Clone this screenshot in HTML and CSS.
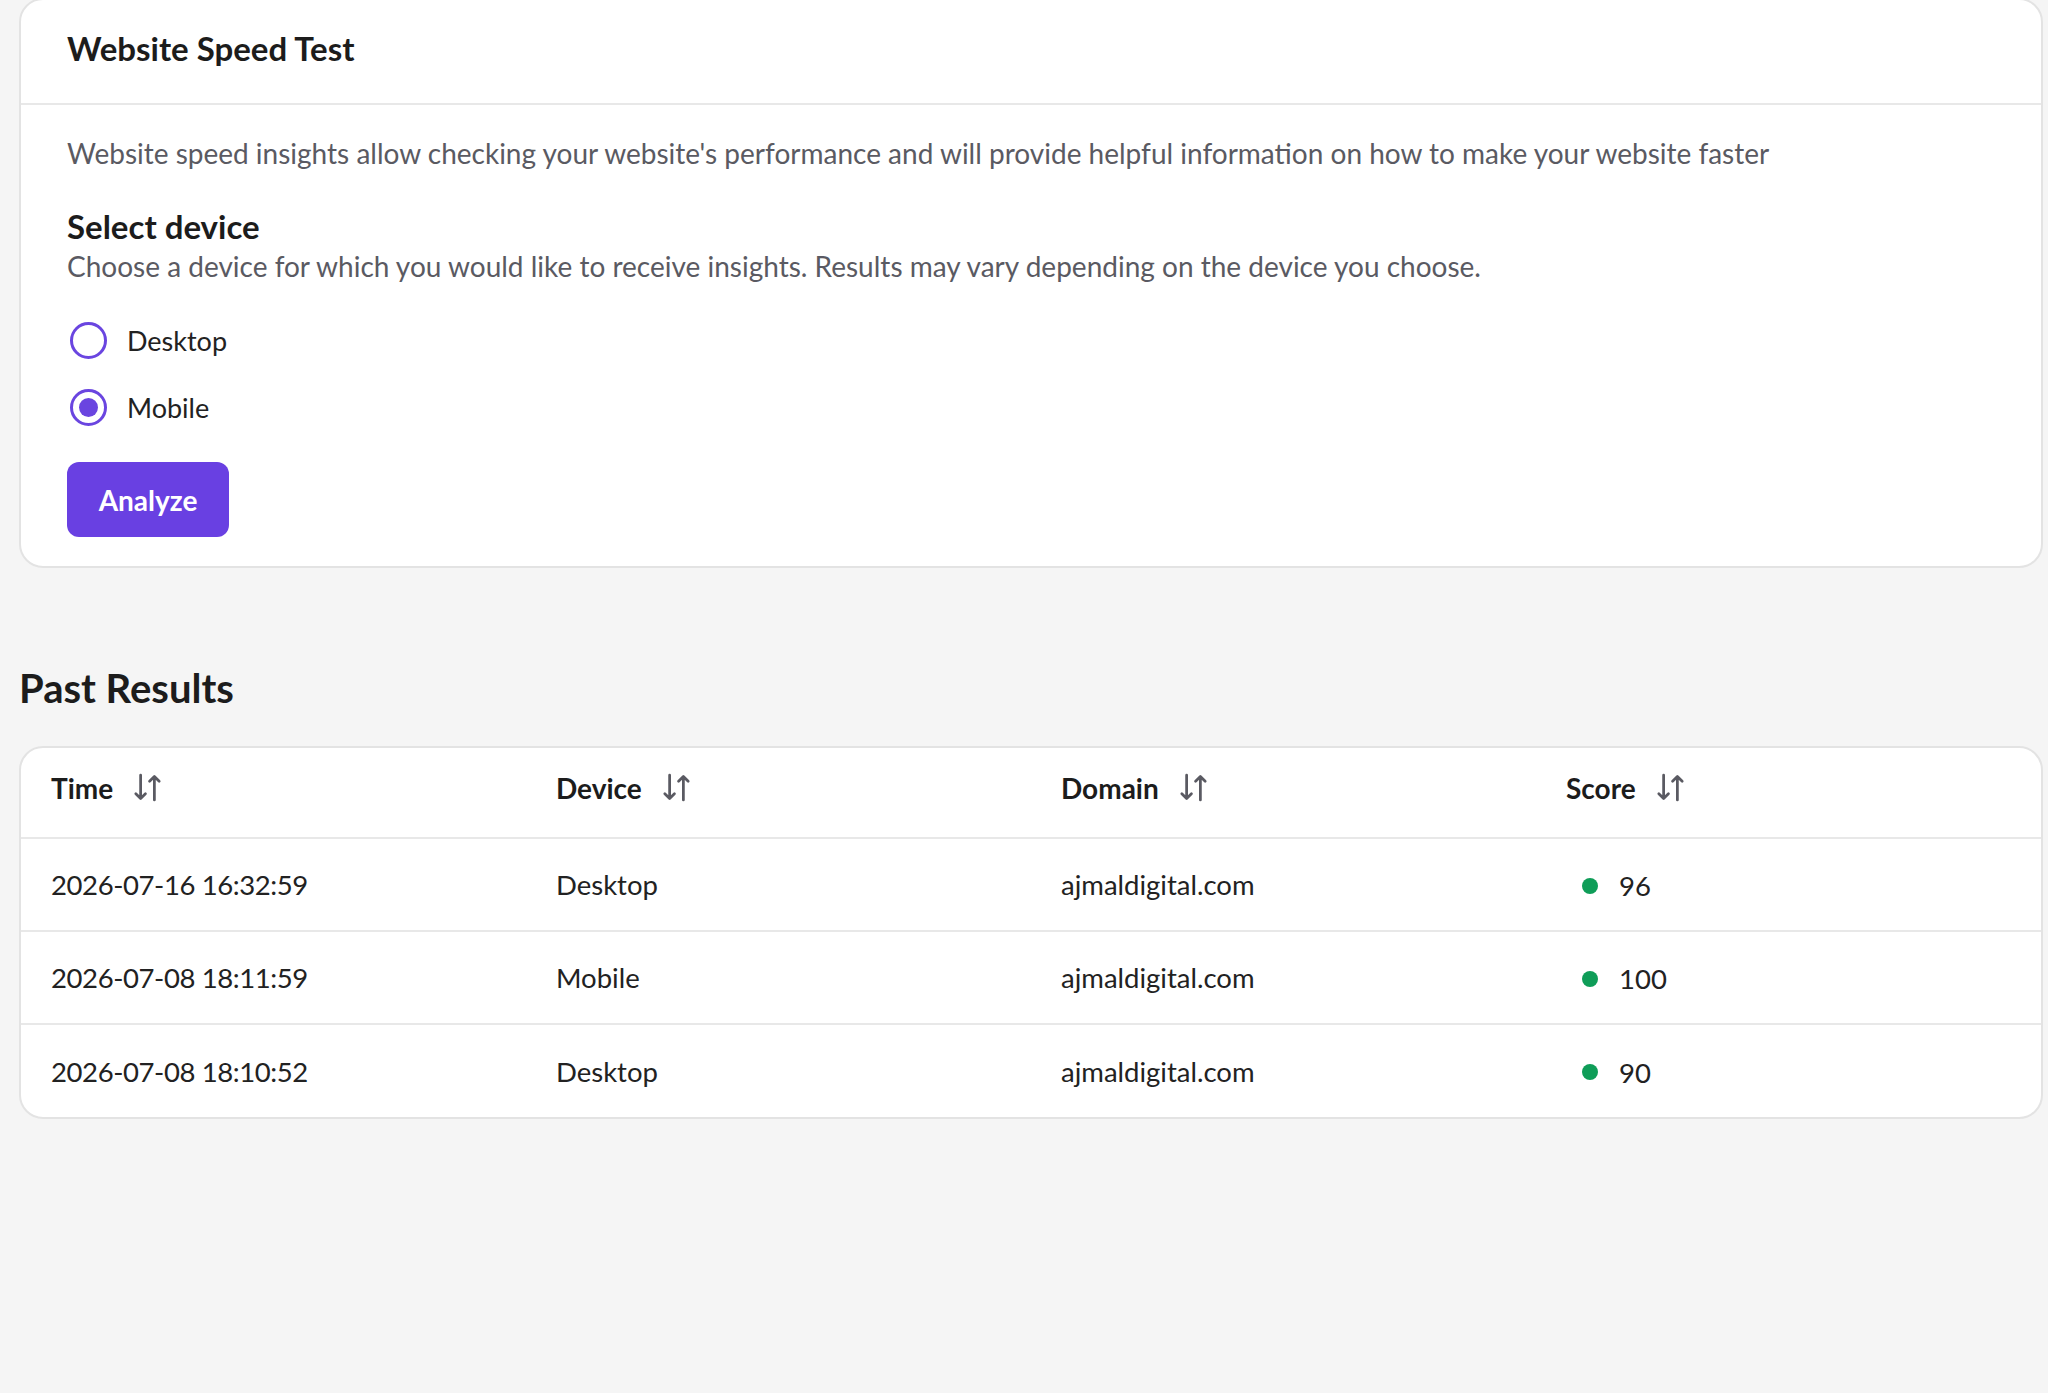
FILE: index.html
```html
<!DOCTYPE html>
<html lang="en">
<head>
    <meta charset="UTF-8">
    <title>Website Speed Test</title>
    <link rel="stylesheet" href="styles.css">
</head>
<body>
    <div class="page">
        <div class="card speed-card">
            <div class="card-header">
                <h1>Website Speed Test</h1>
            </div>
            <div class="card-body">
                <p class="intro">Website speed insights allow checking your website's performance and will provide helpful information on how to make your website faster</p>
                <h2>Select device</h2>
                <p class="hint">Choose a device for which you would like to receive insights. Results may vary depending on the device you choose.</p>
                <div class="options">
                    <label class="option"><span class="radio"></span>Desktop</label>
                    <label class="option"><span class="radio checked"></span>Mobile</label>
                </div>
                <button class="btn-primary">Analyze</button>
            </div>
        </div>

        <h2 class="section-title">Past Results</h2>

        <div class="card table-card">
            <table class="results">
                <thead>
                    <tr>
                        <th><span class="th-inner">Time <svg class="sort" viewBox="0 0 24 24"><path d="M7 3v17M3.5 16.5 7 20l3.5-3.5M17 21V4M13.5 7.5 17 4l3.5 3.5"/></svg></span></th>
                        <th><span class="th-inner">Device <svg class="sort" viewBox="0 0 24 24"><path d="M7 3v17M3.5 16.5 7 20l3.5-3.5M17 21V4M13.5 7.5 17 4l3.5 3.5"/></svg></span></th>
                        <th><span class="th-inner">Domain <svg class="sort" viewBox="0 0 24 24"><path d="M7 3v17M3.5 16.5 7 20l3.5-3.5M17 21V4M13.5 7.5 17 4l3.5 3.5"/></svg></span></th>
                        <th><span class="th-inner">Score <svg class="sort" viewBox="0 0 24 24"><path d="M7 3v17M3.5 16.5 7 20l3.5-3.5M17 21V4M13.5 7.5 17 4l3.5 3.5"/></svg></span></th>
                    </tr>
                </thead>
                <tbody>
                    <tr>
                        <td class="time">2026-07-16 16:32:59</td>
                        <td>Desktop</td>
                        <td>ajmaldigital.com</td>
                        <td><span class="score"><span class="dot"></span>96</span></td>
                    </tr>
                    <tr>
                        <td class="time">2026-07-08 18:11:59</td>
                        <td>Mobile</td>
                        <td>ajmaldigital.com</td>
                        <td><span class="score"><span class="dot"></span>100</span></td>
                    </tr>
                    <tr>
                        <td class="time">2026-07-08 18:10:52</td>
                        <td>Desktop</td>
                        <td>ajmaldigital.com</td>
                        <td><span class="score"><span class="dot"></span>90</span></td>
                    </tr>
                </tbody>
            </table>
        </div>
    </div>
</body>
</html>
```

FILE: styles.css
```css
* { margin: 0; padding: 0; box-sizing: border-box; }
body { font-family: Lato, "Liberation Sans", sans-serif; background: #f5f5f5; color: #1f1f1f; min-height: 100vh; }
.page { padding: 0 5px 0 19px; }
.card { background: white; border: 2px solid #e3e3e3; border-radius: 24px; }
.speed-card { margin-top: -2px; }
.card-header { height: 105px; padding: 0 46px 7px; display: flex; align-items: center; border-bottom: 2px solid #e8e8e8; }
.card-header h1 { font-size: 33px; font-weight: 700; color: #1c1c1c; }
.card-body { padding: 28px 46px 29px; }
.intro { font-size: 28px; line-height: 40px; color: #5a5a62; }
.card-body h2 { font-size: 33px; line-height: 40px; font-weight: 700; margin-top: 33px; color: #1c1c1c; }
.hint { font-size: 28px; line-height: 40px; color: #5a5a62; }
.options { display: flex; flex-direction: column; gap: 19px; margin-top: 30px; }
.option { display: flex; align-items: center; height: 48px; font-size: 27px; color: #222; }
.radio { width: 37px; height: 37px; border: 3.5px solid #6a45e0; border-radius: 50%; margin: 0 20px 0 3px; display: flex; align-items: center; justify-content: center; }
.radio.checked::after { content: ""; width: 19px; height: 19px; border-radius: 50%; background: #6a45e0; }
.btn-primary { margin-top: 31px; width: 162px; height: 75px; border: none; border-radius: 12px; background: #6940e2; color: white; font-family: inherit; font-size: 28px; font-weight: 700; cursor: pointer; }
.section-title { font-size: 40px; line-height: 48px; font-weight: 700; margin-top: 96px; color: #1c1c1c; }
.table-card { margin-top: 34px; overflow: hidden; }
.results { width: 100%; border-collapse: collapse; table-layout: fixed; }
.results th, .results td { text-align: left; padding: 0 0 0 30px; }
.results th { height: 90px; padding-bottom: 10px; font-size: 28px; font-weight: 700; color: #1c1c1c; border-bottom: 2px solid #e8e8e8; }
.results td { height: 93px; font-size: 27.5px; color: #222; }
.results td.time { letter-spacing: -0.4px; }
.results tbody tr + tr td { border-top: 2px solid #e8e8e8; }
.th-inner { display: inline-flex; align-items: center; gap: 18px; }
.sort { width: 33px; height: 33px; fill: none; stroke: #5a5a62; stroke-width: 2; stroke-linecap: round; stroke-linejoin: round; }
.score { display: inline-flex; align-items: center; }
.dot { width: 16px; height: 16px; border-radius: 50%; background: #0f9d58; margin: 0 21px 0 16px; }
```
